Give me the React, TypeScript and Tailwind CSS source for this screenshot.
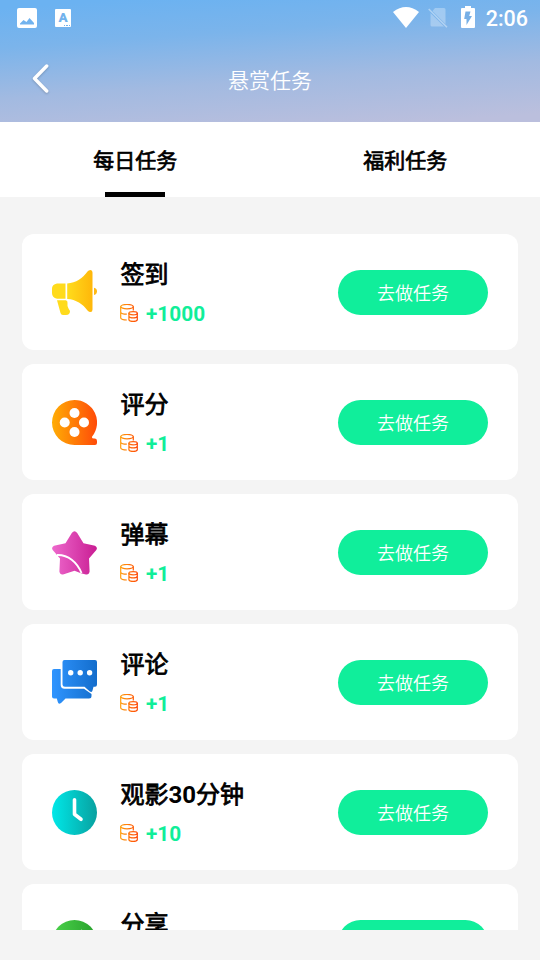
import type { ReactNode } from "react";

interface Task {
  title: string;
  reward: string;
  icon: ReactNode;
}

function Megaphone() {
  return (
    <svg viewBox="0 0 45 45" className="size-[45px]">
      <defs>
        <linearGradient id="horn" x1="0" x2="1" y1="0" y2="0">
          <stop offset="0" stopColor="#ffdc1c" />
          <stop offset="1" stopColor="#ffb70a" />
        </linearGradient>
      </defs>
      <path d="M15.200 13.500C24 13 31 8 35.500 1.500Q36.500 0 38.500 0Q40.500 0 40.500 2.500V39.500Q40.500 42 38.500 42Q37 42 35.500 40.500C31 34 24 29.500 15.200 29Z" fill="url(#horn)" />
      <path d="M5 13.500H13.500V28.800H5Q0 27.500 0 23V18.500Q0 14.500 5 13.500Z" fill="#ffdb1c" />
      <path d="M5 30.300H14Q16 31 15.500 33.500Q15 36 16.500 38.500L18 41Q18 45 14 45H11Q9 45 8.500 43Z" fill="#ffdb1c" />
      <path d="M42 17.800Q45 18.500 45 21.300Q45 24.300 42 25Z" fill="#ffb914" />
    </svg>
  );
}

function Reel() {
  return (
    <svg viewBox="0 0 45 45" className="size-[45px]">
      <defs>
        <linearGradient id="reel" x1="0" x2="1" y1="0" y2="0">
          <stop offset="0" stopColor="#ffad05" />
          <stop offset="1" stopColor="#ff4b08" />
        </linearGradient>
      </defs>
      <path d="M22.500 0A22.500 22.500 0 0 1 40 36.700Q39.500 38.500 42 38.500H43Q45 38.500 45 41V43Q45 45 43 45H22.500A22.500 22.500 0 0 1 22.500 0Z" fill="url(#reel)" />
      <g fill="#fff">
        <circle cx="22.500" cy="13" r="5" />
        <circle cx="12.700" cy="22.500" r="5" />
        <circle cx="32" cy="22.500" r="5" />
        <circle cx="22.500" cy="32" r="5" />
      </g>
    </svg>
  );
}

function Star() {
  return (
    <svg viewBox="0 0 45 45" className="size-[45px]">
      <defs>
        <linearGradient id="star" x1="0" x2="1" y1="0" y2="0">
          <stop offset="0" stopColor="#ed68cc" />
          <stop offset="1" stopColor="#c91d93" />
        </linearGradient>
      </defs>
      <path d="M19.800 3Q22.500 -.5 25.200 3L31.500 13.300L43 15.800Q46 17.500 44.300 20L37 28.500L37.600 41.500Q37 45 34 44.500L29 43.300L22.500 40.800L11 44.500Q8 45 7.400 41.500L8 28.500L.7 20Q-1 17.500 2 15.800L13.500 13.300Z" fill="url(#star)" />
      <path d="M5 25C16 24.500 25 32 29.500 43" fill="none" stroke="#fff" strokeWidth="1.900" />
    </svg>
  );
}

function Chat() {
  return (
    <svg viewBox="0 0 45 45" className="size-[45px]">
      <defs>
        <linearGradient id="chat" x1="0" x2="45" y1="0" y2="0" gradientUnits="userSpaceOnUse">
          <stop offset="0" stopColor="#3095ff" />
          <stop offset="1" stopColor="#136dcc" />
        </linearGradient>
      </defs>
      <path d="M2 9H8.700V25Q8.700 28.700 12.500 28.700H32L39.500 34V36Q39.500 38.500 37 38.500H13.500L9 43Q6.500 45 5.800 42L4.800 38.500H2Q0 38.500 0 36.500V11Q0 9 2 9Z" fill="url(#chat)" />
      <path d="M12.500 0H43Q45 0 45 2V24.500Q45 26.700 43 26.700H41.500L40.500 30.500Q40 33 37.500 31.200L32.500 26.700H13Q10.500 26.700 10.500 24.500V2Q10.500 0 12.500 0Z" fill="url(#chat)" />
      <g fill="#fff">
        <circle cx="18.700" cy="12.800" r="2.700" />
        <circle cx="28.200" cy="12.800" r="2.700" />
        <circle cx="37.600" cy="12.800" r="2.700" />
      </g>
    </svg>
  );
}

function ClockIcon() {
  return (
    <svg viewBox="0 0 45 45" className="size-[45px]">
      <defs>
        <linearGradient id="clock" x1="0" x2="1" y1="0" y2="0">
          <stop offset="0" stopColor="#00e8e8" />
          <stop offset="1" stopColor="#08a1a0" />
        </linearGradient>
      </defs>
      <circle cx="22.500" cy="22.500" r="22.500" fill="url(#clock)" />
      <path d="M22.500 9.700V24.300L29 29.300" fill="none" stroke="#fff" strokeWidth="3.600" strokeLinecap="round" strokeLinejoin="round" />
    </svg>
  );
}

function Share() {
  return (
    <svg viewBox="0 0 45 45" className="size-[45px]">
      <defs>
        <linearGradient id="share" x1="0" x2="1" y1="0" y2="0">
          <stop offset="0" stopColor="#4bd34b" />
          <stop offset="1" stopColor="#28a02c" />
        </linearGradient>
      </defs>
      <circle cx="22.500" cy="22.500" r="22.500" fill="url(#share)" />
      <path d="M29 9.300L38 18L29 27V22Q18 21 12 31Q13 16 29 14Z" fill="#fff" />
    </svg>
  );
}

function Coins() {
  return (
    <svg viewBox="0 0 18 18" className="size-[18px]" fill="none" strokeWidth="1.200">
      <defs>
        <linearGradient id="coins" x1="0" x2="18" y1="0" y2="0" gradientUnits="userSpaceOnUse">
          <stop offset="0" stopColor="#ffa00c" />
          <stop offset="1" stopColor="#ff4808" />
        </linearGradient>
      </defs>
      <g stroke="url(#coins)">
        <ellipse cx="7" cy="2.600" rx="6.300" ry="2.200" />
        <path d="M.7 2.600V14Q1.500 15.800 6.800 16M13.300 2.600V6.500M.7 8.200Q1.500 10 6.800 10.200" />
        <ellipse cx="13.100" cy="9.200" rx="4.200" ry="1.600" />
        <path d="M8.900 9V15.700Q9.400 17.300 13.100 17.300Q16.800 17.300 17.300 15.700V9M8.900 12.300Q9.400 13.900 13.100 13.900Q16.800 13.900 17.300 12.300" />
      </g>
    </svg>
  );
}

const tasks: Task[] = [
  { title: "签到", reward: "+1000", icon: <Megaphone /> },
  { title: "评分", reward: "+1", icon: <Reel /> },
  { title: "弹幕", reward: "+1", icon: <Star /> },
  { title: "评论", reward: "+1", icon: <Chat /> },
  { title: "观影30分钟", reward: "+10", icon: <ClockIcon /> },
  { title: "分享", reward: "+1", icon: <Share /> },
];

function StatusBar() {
  return (
    <div className="flex h-9 items-center pl-[17px] pr-3">
      <svg viewBox="0 0 20 20" className="size-5" fill="#fff">
        <path fillRule="evenodd" d="M2 0H18Q20 0 20 2V18Q20 20 18 20H2Q0 20 0 18V2Q0 0 2 0ZM3 16.500H17V15L12.500 10L9.500 14L6.500 12L3 15.500Z" />
      </svg>
      <div className="relative ml-[18px] flex h-[18px] w-4 justify-center rounded-[1px] bg-white font-['Roboto'] text-[13.500px] leading-[17px] font-black text-[#72b2ec]">
        A
        <span className="absolute right-[1px] bottom-[1px] flex gap-px">
          <i className="size-[1.500px] bg-[#72b2ec]" />
          <i className="size-[1.500px] bg-[#72b2ec]" />
          <i className="size-[1.500px] bg-[#72b2ec]" />
        </span>
      </div>
      <svg viewBox="0 0 26 21" className="-mt-[2px] ml-auto h-[21px] w-[26px]" fill="#fff">
        <path d="M0 5Q13 -5 26 5L13 21Z" />
      </svg>
      <svg viewBox="0 0 20 21" className="-mt-[1px] ml-[9px] h-[21px] w-5">
        <path d="M7 1H16Q17.500 1 17.500 2.500V17L4.500 4ZM2.500 6L16 19.500H4Q2.500 19.500 2.500 18Z" fill="#fff" opacity=".3" />
        <path d="M.7 2L19 20.300" stroke="#fff" strokeWidth="1.500" opacity=".4" />
      </svg>
      <svg viewBox="0 0 14 22" className="-mt-[2px] ml-[13px] h-[22px] w-[14px]">
        <path d="M1 2H4V0H10V2H13Q14 2 14 3V21Q14 22 13 22H1Q0 22 0 21V3Q0 2 1 2Z" fill="#fff" />
        <path d="M4.500 5.500H9.500L8.200 10H11L5.500 19V13H3.200Z" fill="#76afe6" />
      </svg>
      <span className="ml-[11px] pt-[2px] font-['Roboto'] text-[21.500px] leading-6 font-medium">2:06</span>
    </div>
  );
}

function TaskCard({ title, reward, icon }: Task) {
  return (
    <li className="flex h-[116px] shrink-0 items-center rounded-xl bg-white px-[30px]">
      <div className="mt-px">{icon}</div>
      <div className="ml-[23px] flex h-full flex-col pt-[21px]">
        <h2 className="h-9 pl-[0.5px] text-[24px] leading-9 text-black [-webkit-text-stroke:0.8px_#000]">
          {title.split(/(\d+)/).map((part, i) =>
            /^\d+$/.test(part) ? (
              <span key={i} className="font-['Roboto'] font-bold [-webkit-text-stroke:0px]">{part}</span>
            ) : (
              part
            ),
          )}
        </h2>
        <div className="mt-[10px] flex h-6 items-center gap-2">
          <Coins />
          <span className="pt-[2px] font-['Roboto'] text-[20.800px] leading-6 font-bold text-[#10ee99]">{reward}</span>
        </div>
      </div>
      <button className="mt-px ml-auto h-[45px] w-[150px] rounded-full bg-[#10ee9b] text-[18px] leading-[45px] font-[350] text-white">
        去做任务
      </button>
    </li>
  );
}

export default function App() {
  return (
    <div className="flex h-[960px] w-[540px] flex-col overflow-hidden bg-[#f4f4f4] font-['Noto_Sans_CJK_SC','Roboto',sans-serif]">
      <header className="h-[122px] shrink-0 bg-linear-[176deg,#6bb2f1_5%,#7bb4eb_30%,#a2bae1_62%,#bbbfdd_95%] text-white">
        <StatusBar />
        <div className="flex h-[86px] items-center px-8">
          <svg viewBox="0 0 18 32" className="-mt-[2px] h-8 w-[18px] drop-shadow-[0_1px_1px_#0003]" fill="none">
            <path d="M14.700 4L2.500 16.500L14.700 29" stroke="#fff" strokeWidth="3.400" strokeLinecap="round" strokeLinejoin="round" />
          </svg>
          <h1 className="flex-1 pr-[18px] text-center text-[21px] leading-8 font-[350]">悬赏任务</h1>
        </div>
      </header>
      <nav className="grid h-[75px] shrink-0 grid-cols-2 bg-white text-[21px] leading-8 text-black [-webkit-text-stroke:0.7px_#000]">
        <div className="flex flex-col items-center justify-between pt-[21px]">
          <span className="pl-[0.5px]">每日任务</span>
          <div className="h-[5px] w-[60px] bg-black" />
        </div>
        <div className="flex flex-col items-center pt-[21px]">
          <span className="pl-[0.5px]">福利任务</span>
        </div>
      </nav>
      <ul className="flex h-[733px] shrink-0 flex-col gap-[14px] overflow-hidden px-[22px] pt-[37px]">
        {tasks.map((task) => (
          <TaskCard key={task.title} {...task} />
        ))}
      </ul>
    </div>
  );
}
